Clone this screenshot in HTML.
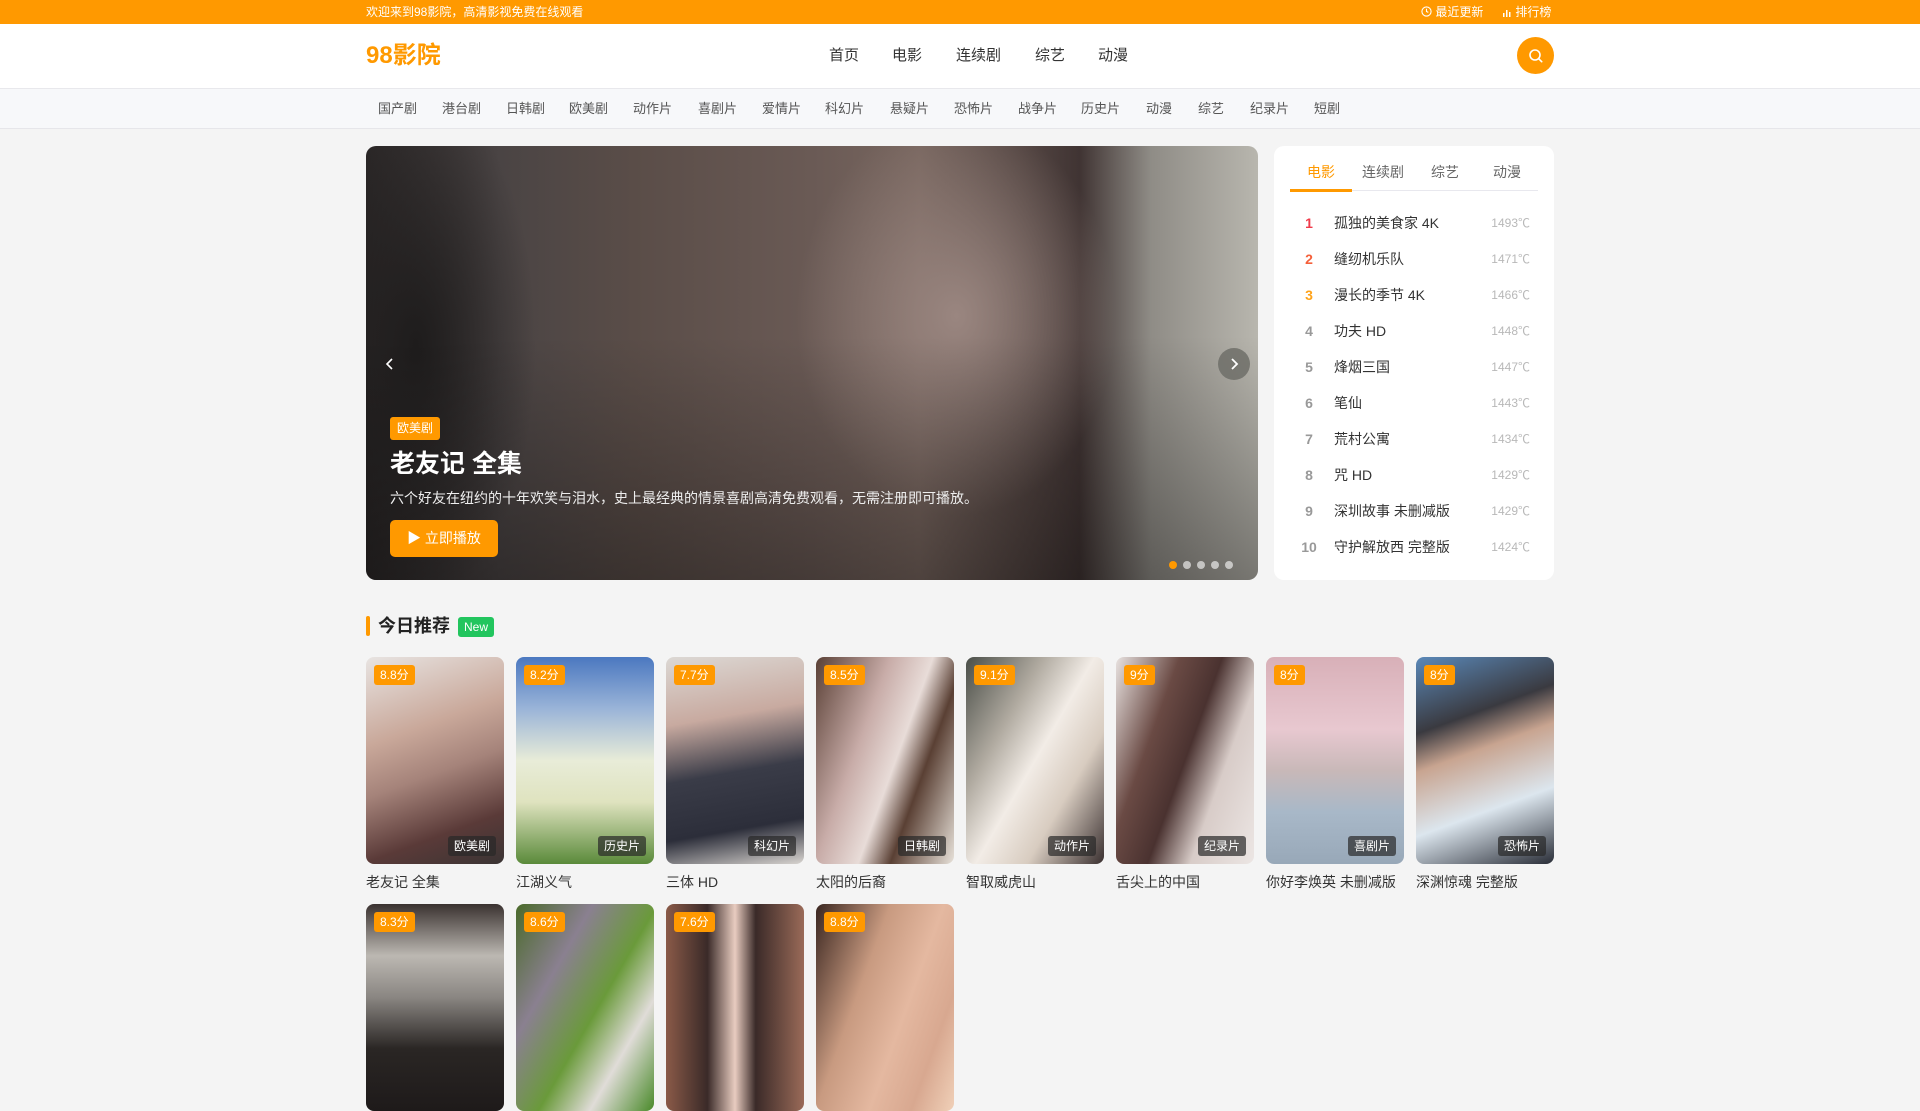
<!DOCTYPE html>
<html><head><meta charset="utf-8"><style>
*{margin:0;padding:0;box-sizing:border-box}
body{width:1920px;height:1080px;overflow:hidden;background:#f4f4f4;font-family:"Liberation Sans","Noto Sans CJK SC",sans-serif;color:#333;position:relative}
.abs{position:absolute}
.top{left:0;top:0;width:1920px;height:24px;background:#ff9900;color:#fff;font-size:12px;line-height:24px}
.hdr{left:0;top:24px;width:1920px;height:64px;background:#fff}
.cat{left:0;top:88px;width:1920px;height:41px;background:#f7f8fa;border-top:1px solid #e8e8ec;border-bottom:1px solid #e6e6ea}
.cat span{position:absolute;top:0;line-height:40px;font-size:13px;color:#555}
.nav{position:absolute;top:0;line-height:64px;font-size:15px;color:#333}
.banner{left:366px;top:146px;width:892px;height:434px;border-radius:10px;overflow:hidden;
background:
radial-gradient(ellipse 160px 200px at 590px 170px,#9a8680 0%,rgba(154,134,128,0) 100%),
radial-gradient(ellipse 120px 260px at 50px 200px,#1e1c1c 0%,rgba(30,28,28,0) 100%),
linear-gradient(90deg,#2c2828 0%,#4a4444 15%,#5a4d48 30%,#6a5a55 50%,#78665f 62%,#403433 80%,#8f8c86 88%,#b8b6ae 100%)}
.side{left:1274px;top:146px;width:280px;height:434px;background:#fff;border-radius:10px}
.row{position:absolute;left:0;width:280px;height:36px;line-height:36px;font-size:14px}
.row .n{position:absolute;left:25px;width:20px;text-align:center;font-weight:bold;color:#999}
.row .t{position:absolute;left:60px;color:#333}
.row .h{position:absolute;right:24px;color:#b8b8b8;font-size:12px}
.card{position:absolute;width:138px}
.img{width:138px;height:207px;border-radius:8px;position:relative;overflow:hidden}
.sc{position:absolute;left:8px;top:8px;height:20px;line-height:20px;padding:0 6px;background:#ff9900;color:#fff;font-size:12px;border-radius:3px}
.tg{position:absolute;right:8px;bottom:8px;height:20px;line-height:20px;padding:0 6px;background:rgba(40,40,40,.7);color:#fff;font-size:12px;border-radius:3px}
.ct{margin-top:8px;font-size:14px;color:#333;line-height:20px}
</style></head><body>
<div class="abs top"><span style="position:absolute;left:366px">欢迎来到98影院，高清影视免费在线观看</span>
<span style="position:absolute;left:1421px"><svg width="11" height="11" viewBox="0 0 12 12" style="vertical-align:-1px"><circle cx="6" cy="6" r="5" fill="none" stroke="#fff" stroke-width="1.2"/><path d="M6 3v3l2 1" stroke="#fff" fill="none" stroke-width="1.2"/></svg> 最近更新</span>
<span style="position:absolute;left:1502px"><svg width="10" height="10" viewBox="0 0 10 10" style="vertical-align:-1px"><rect x="1" y="6" width="1.5" height="4" fill="#fff"/><rect x="4" y="3" width="1.5" height="7" fill="#fff"/><rect x="7" y="5" width="1.5" height="5" fill="#fff"/></svg> 排行榜</span></div>
<div class="abs hdr">
<div style="position:absolute;left:366px;top:0;line-height:64px;font-size:24px;font-weight:bold;color:#ff9900">98影院</div>
<span class="nav" style="left:829px">首页</span><span class="nav" style="left:892px">电影</span><span class="nav" style="left:956px">连续剧</span><span class="nav" style="left:1035px">综艺</span><span class="nav" style="left:1098px">动漫</span>
<div style="position:absolute;left:1517px;top:13px;width:37px;height:37px;border-radius:50%;background:#ff9900"><svg width="37" height="37" viewBox="0 0 37 37"><circle cx="18" cy="18" r="5" fill="none" stroke="#fff" stroke-width="1.6"/><path d="M21.7 21.7l3 3" stroke="#fff" stroke-width="1.6" stroke-linecap="round"/></svg></div>
</div>
<div class="abs cat">
<span style="left:378px">国产剧</span><span style="left:442px">港台剧</span><span style="left:506px">日韩剧</span><span style="left:569px">欧美剧</span><span style="left:633px">动作片</span><span style="left:698px">喜剧片</span><span style="left:762px">爱情片</span><span style="left:825px">科幻片</span><span style="left:890px">悬疑片</span><span style="left:954px">恐怖片</span><span style="left:1018px">战争片</span><span style="left:1081px">历史片</span><span style="left:1146px">动漫</span><span style="left:1198px">综艺</span><span style="left:1250px">纪录片</span><span style="left:1314px">短剧</span>
</div>
<div class="abs banner">
<div style="position:absolute;left:0;top:190px;width:892px;height:244px;background:linear-gradient(180deg,rgba(0,0,0,0),rgba(0,0,0,.35))"></div>
<svg class="abs" style="left:18px;top:210px" width="12" height="16" viewBox="0 0 12 16"><path d="M8 3L3 8l5 5" stroke="#fff" stroke-width="1.6" fill="none"/></svg>
<div style="position:absolute;left:852px;top:202px;width:32px;height:32px;border-radius:50%;background:rgba(110,110,105,.85)"><svg width="32" height="32" viewBox="0 0 32 32"><path d="M14 11l5 5-5 5" stroke="#fff" stroke-width="1.8" fill="none"/></svg></div>
<div style="position:absolute;left:24px;top:271px;height:23px;line-height:23px;padding:0 7px;background:#ff9900;color:#fff;font-size:12px;border-radius:3px">欧美剧</div>
<div style="position:absolute;left:24px;top:300px;font-size:25px;font-weight:bold;color:#fff;line-height:36px">老友记 全集</div>
<div style="position:absolute;left:24px;top:342px;font-size:14px;color:#eee;line-height:20px">六个好友在纽约的十年欢笑与泪水，史上最经典的情景喜剧高清免费观看，无需注册即可播放。</div>
<div style="position:absolute;left:24px;top:374px;width:108px;height:37px;line-height:37px;background:#ff9900;color:#fff;font-size:14px;border-radius:5px;text-align:center">▶ 立即播放</div>
<div style="position:absolute;left:803px;top:415px;width:8px;height:8px;border-radius:50%;background:#ff9900"></div>
<div style="position:absolute;left:817px;top:415px;width:8px;height:8px;border-radius:50%;background:rgba(255,255,255,.6)"></div>
<div style="position:absolute;left:831px;top:415px;width:8px;height:8px;border-radius:50%;background:rgba(255,255,255,.6)"></div>
<div style="position:absolute;left:845px;top:415px;width:8px;height:8px;border-radius:50%;background:rgba(255,255,255,.6)"></div>
<div style="position:absolute;left:859px;top:415px;width:8px;height:8px;border-radius:50%;background:rgba(255,255,255,.6)"></div>
</div>
<div class="abs side">
<div style="position:absolute;left:16px;top:44px;width:248px;height:1px;background:#e8e8ee"></div>
<div style="position:absolute;left:16px;top:43px;width:62px;height:3px;background:#ff9900"></div>
<div style="position:absolute;left:16px;top:12px;width:62px;text-align:center;font-size:14px;color:#ff9900;line-height:28px">电影</div>
<div style="position:absolute;left:78px;top:12px;width:62px;text-align:center;font-size:14px;color:#666;line-height:28px">连续剧</div>
<div style="position:absolute;left:140px;top:12px;width:62px;text-align:center;font-size:14px;color:#666;line-height:28px">综艺</div>
<div style="position:absolute;left:202px;top:12px;width:62px;text-align:center;font-size:14px;color:#666;line-height:28px">动漫</div>
<div class="row" style="top:59px"><span class="n" style="color:#f03a4a">1</span><span class="t">孤独的美食家 4K</span><span class="h">1493℃</span></div>
<div class="row" style="top:95px"><span class="n" style="color:#f5603a">2</span><span class="t">缝纫机乐队</span><span class="h">1471℃</span></div>
<div class="row" style="top:131px"><span class="n" style="color:#ffa31a">3</span><span class="t">漫长的季节 4K</span><span class="h">1466℃</span></div>
<div class="row" style="top:167px"><span class="n">4</span><span class="t">功夫 HD</span><span class="h">1448℃</span></div>
<div class="row" style="top:203px"><span class="n">5</span><span class="t">烽烟三国</span><span class="h">1447℃</span></div>
<div class="row" style="top:239px"><span class="n">6</span><span class="t">笔仙</span><span class="h">1443℃</span></div>
<div class="row" style="top:275px"><span class="n">7</span><span class="t">荒村公寓</span><span class="h">1434℃</span></div>
<div class="row" style="top:311px"><span class="n">8</span><span class="t">咒 HD</span><span class="h">1429℃</span></div>
<div class="row" style="top:347px"><span class="n">9</span><span class="t">深圳故事 未删减版</span><span class="h">1429℃</span></div>
<div class="row" style="top:383px"><span class="n">10</span><span class="t">守护解放西 完整版</span><span class="h">1424℃</span></div>
</div>
<div class="abs" style="left:366px;top:616px;width:4px;height:20px;background:#ff9900;border-radius:2px"></div>
<div class="abs" style="left:378px;top:613px;font-size:18px;font-weight:bold;color:#222;line-height:26px">今日推荐</div>
<div class="abs" style="left:458px;top:617px;width:36px;height:20px;line-height:20px;text-align:center;background:#22c55e;color:#fff;font-size:12px;border-radius:3px">New</div>

<div class="card" style="left:366px;top:657px"><div class="img" style="background:linear-gradient(160deg,#e8e4e2 0%,#c9a89a 35%,#a5837a 55%,#5a3a38 80%,#3a3434 100%)"><span class="sc">8.8分</span><span class="tg">欧美剧</span></div><div class="ct">老友记 全集</div></div>
<div class="card" style="left:516px;top:657px"><div class="img" style="background:linear-gradient(180deg,#4b78c0 0%,#9ab4d8 25%,#e8ecd8 50%,#dfe3bf 70%,#5a8a3a 100%)"><span class="sc">8.2分</span><span class="tg">历史片</span></div><div class="ct">江湖义气</div></div>
<div class="card" style="left:666px;top:657px"><div class="img" style="background:linear-gradient(170deg,#dcd8d4 0%,#c8aaa0 30%,#3a3c48 55%,#2c2e3a 80%,#d8d4d0 100%)"><span class="sc">7.7分</span><span class="tg">科幻片</span></div><div class="ct">三体 HD</div></div>
<div class="card" style="left:816px;top:657px"><div class="img" style="background:linear-gradient(110deg,#5a4036 0%,#c8aca8 35%,#e8dcd8 55%,#5a4034 70%,#e8e2da 100%)"><span class="sc">8.5分</span><span class="tg">日韩剧</span></div><div class="ct">太阳的后裔</div></div>
<div class="card" style="left:966px;top:657px"><div class="img" style="background:linear-gradient(120deg,#4a4e48 0%,#b0aaa0 30%,#f2ece6 50%,#d8ccc0 70%,#3a3030 100%)"><span class="sc">9.1分</span><span class="tg">动作片</span></div><div class="ct">智取威虎山</div></div>
<div class="card" style="left:1116px;top:657px"><div class="img" style="background:linear-gradient(110deg,#e8e2e0 0%,#6a4a44 30%,#4a3230 50%,#d8ccc8 70%,#ece6e4 100%)"><span class="sc">9分</span><span class="tg">纪录片</span></div><div class="ct">舌尖上的中国</div></div>
<div class="card" style="left:1266px;top:657px"><div class="img" style="background:linear-gradient(180deg,#d8b0b8 0%,#e8c8d0 35%,#c8b8b8 55%,#a8b8c8 75%,#98a8b8 100%)"><span class="sc">8分</span><span class="tg">喜剧片</span></div><div class="ct">你好李焕英 未删减版</div></div>
<div class="card" style="left:1416px;top:657px"><div class="img" style="background:linear-gradient(160deg,#5a88b8 0%,#3a3a40 30%,#c8a490 45%,#dce6ee 70%,#2a2e38 100%)"><span class="sc">8分</span><span class="tg">恐怖片</span></div><div class="ct">深渊惊魂 完整版</div></div>

<div class="card" style="left:366px;top:904px"><div class="img" style="background:linear-gradient(180deg,#3a3230 0%,#bcb8b2 25%,#8a8682 45%,#2a2624 70%,#1e1a1a 100%)"><span class="sc">8.3分</span></div></div>
<div class="card" style="left:516px;top:904px"><div class="img" style="background:linear-gradient(120deg,#4a6a2a 0%,#8a8090 30%,#6a9a3a 55%,#e0dcd8 75%,#4a8a2a 100%)"><span class="sc">8.6分</span></div></div>
<div class="card" style="left:666px;top:904px"><div class="img" style="background:linear-gradient(90deg,#8a5a48 0%,#3a2a28 30%,#e8ccc0 50%,#3a2a28 65%,#9a6a58 100%)"><span class="sc">7.6分</span></div></div>
<div class="card" style="left:816px;top:904px"><div class="img" style="background:linear-gradient(110deg,#3a2620 0%,#c89a80 35%,#e4b8a0 60%,#d8a890 80%,#f0d0b8 100%)"><span class="sc">8.8分</span></div></div>
</body></html>
